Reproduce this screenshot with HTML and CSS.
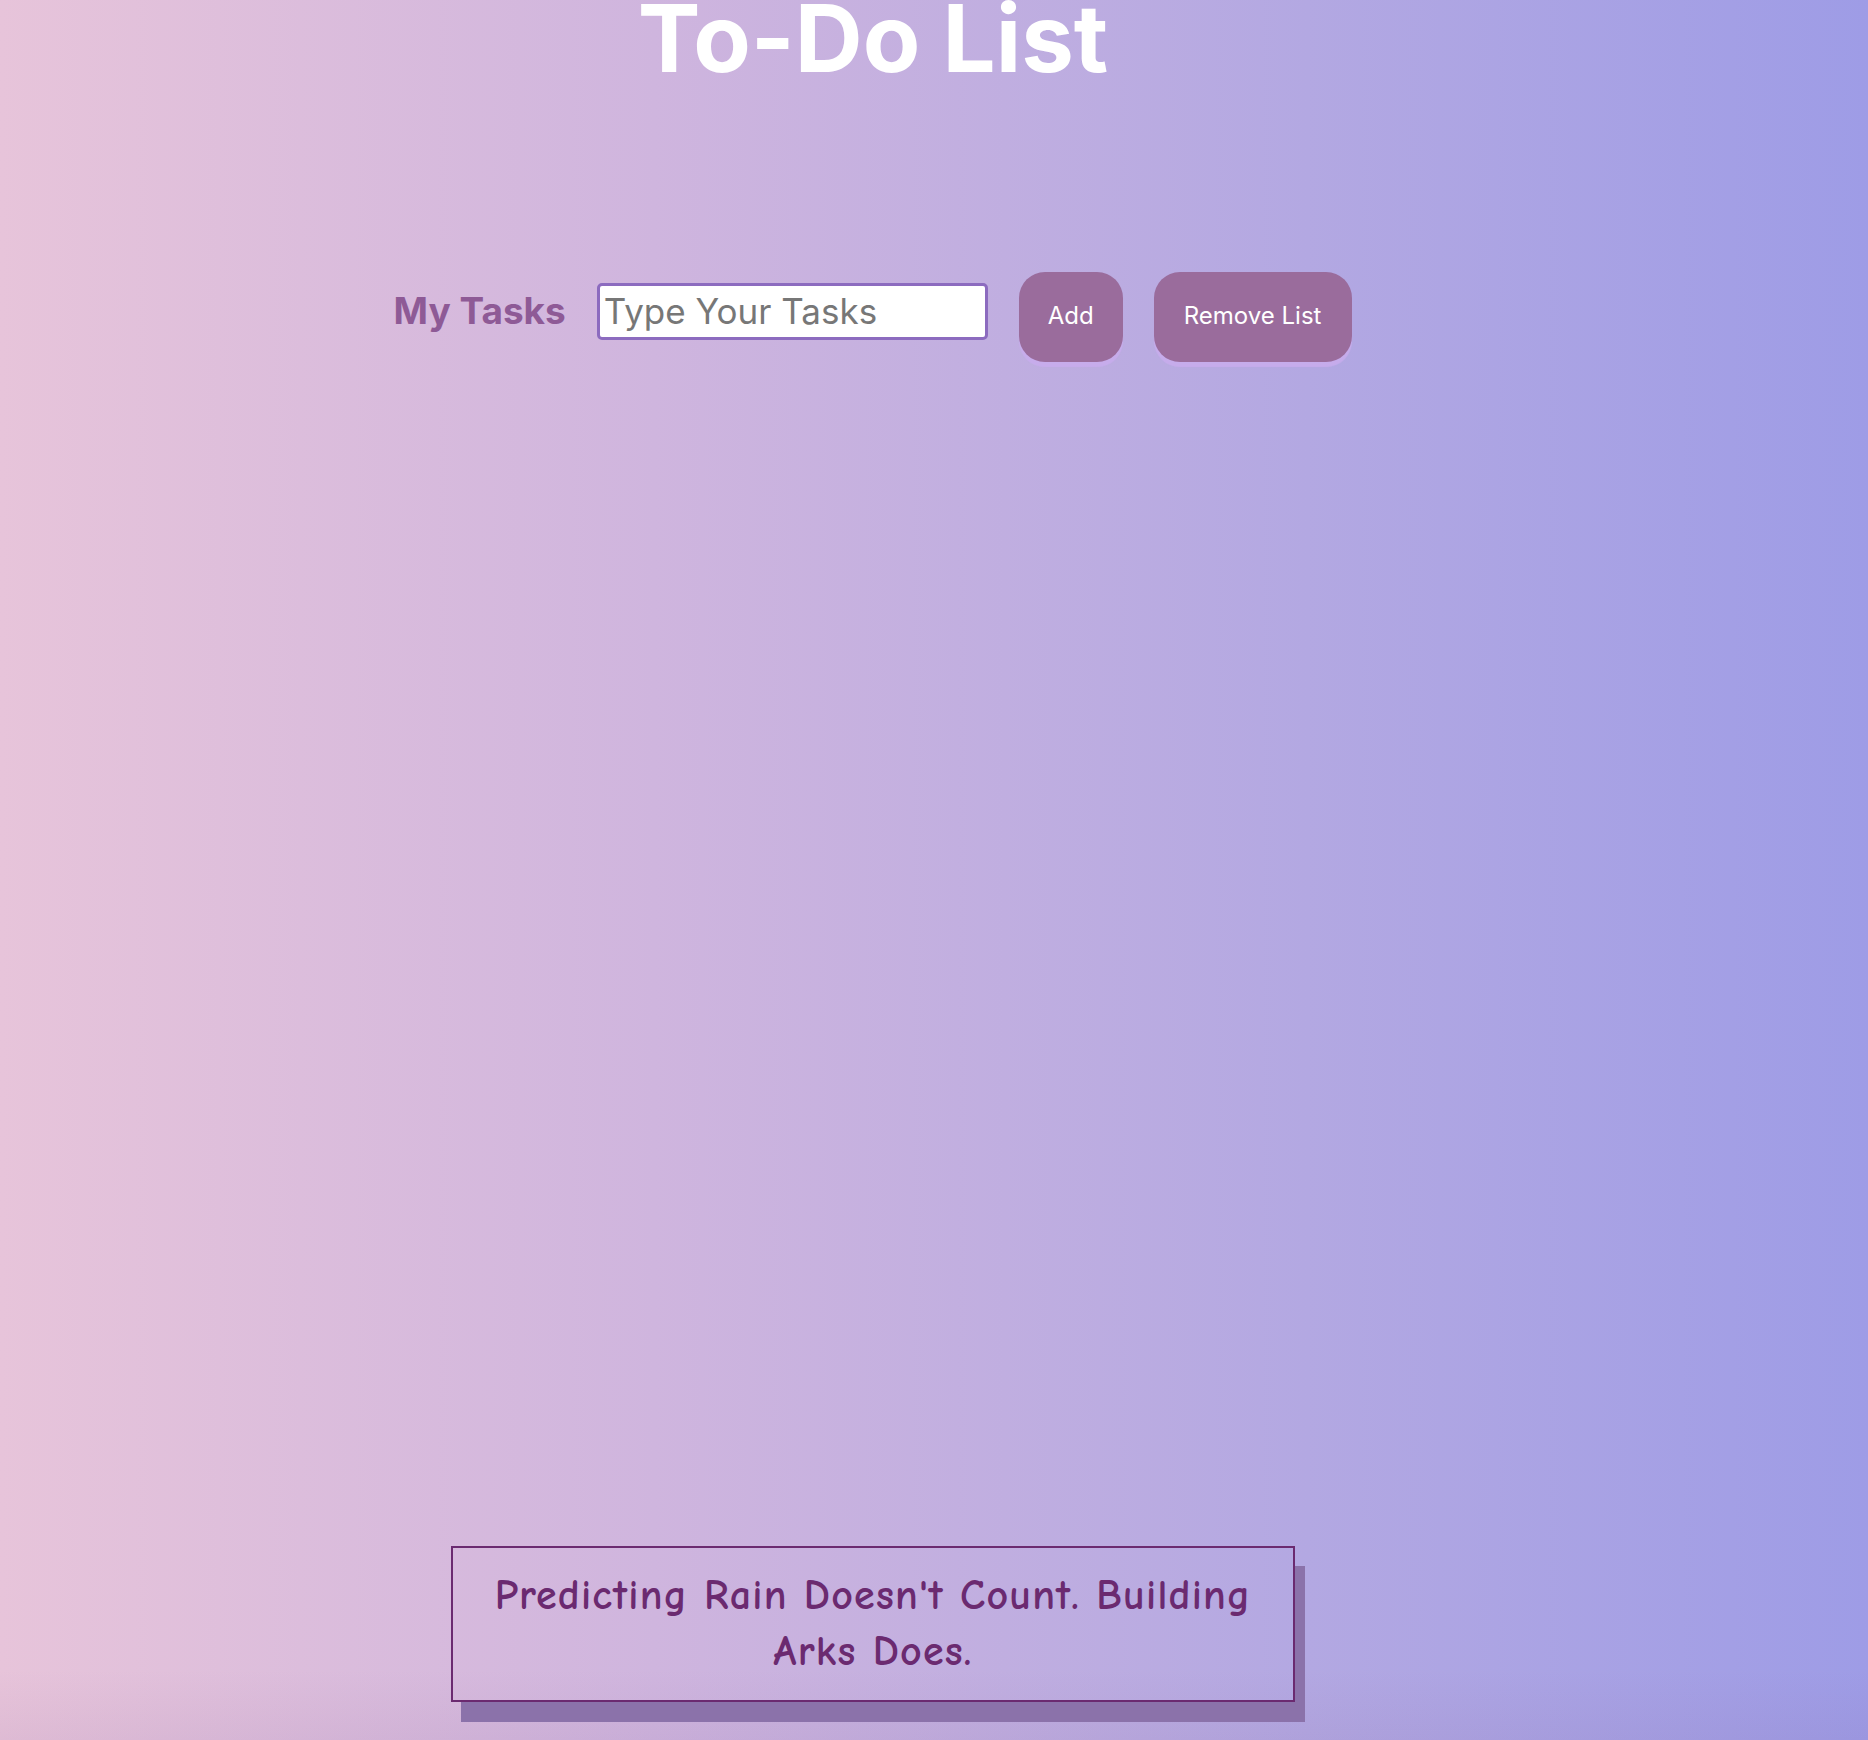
FILE: index.html
```html
<!DOCTYPE html>
<html lang="en">
<head>
<meta charset="utf-8">
<title>To-Do List</title>
<link rel="stylesheet" href="styles.css">
</head>
<body>
<main class="page">
  <h1 class="title">To-Do List</h1>
  <section class="task-bar">
    <label class="task-label" for="task">My Tasks</label>
    <input class="task-input" id="task" type="text" placeholder="Type Your Tasks">
    <button class="btn" type="button">Add</button>
    <button class="btn" type="button">Remove List</button>
  </section>
  <ul class="task-list"></ul>
  <footer class="quote-wrap">
    <blockquote class="quote">Predicting Rain Doesn't Count. Building Arks Does.</blockquote>
  </footer>
</main>
</body>
</html>
```

FILE: styles.css
```css
html, body {
  margin: 0;
  padding: 0;
}

body {
  min-height: 1740px;
  background:
    linear-gradient(to bottom, rgba(120, 80, 140, 0) 0, rgba(120, 80, 140, 0) calc(100% - 70px), rgba(120, 80, 140, 0.08) 100%),
    linear-gradient(to right, #e7c4da 0%, #cfb5de 35%, #b3a8e2 70%, #9e9ce6 100%);
  font-family: Inter, "Liberation Sans", sans-serif;
}

.page {
  box-sizing: border-box;
  min-height: 1740px;
  padding-right: 122px;
  display: flex;
  flex-direction: column;
  align-items: center;
  padding-bottom: 38px;
}

.title {
  margin: -19px 0 0;
  font-size: 94px;
  font-weight: 700;
  color: #ffffff;
  line-height: normal;
}

.task-bar {
  margin-top: 177px;
  display: flex;
  align-items: baseline;
  gap: 31px;
}

.task-label {
  font-size: 37px;
  font-weight: 700;
  color: #8e5a96;
}

.task-input {
  box-sizing: border-box;
  width: 391px;
  height: 57px;
  border: 3px solid #8c6bbf;
  border-radius: 5px;
  padding: 0 4px;
  background: #ffffff;
  font-family: Inter, "Liberation Sans", sans-serif;
  font-size: 35px;
  color: #333;
  outline: none;
}

.task-input::placeholder {
  color: #777777;
}

.btn {
  padding: 29px 29px 32px;
  border: none;
  border-radius: 26px;
  background: #9a6c9c;
  color: #ffffff;
  font-family: Inter, "Liberation Sans", sans-serif;
  font-size: 24px;
  line-height: normal;
  box-shadow: 0 5px 1px rgba(200, 172, 236, 0.9);
  cursor: pointer;
}

.btn + .btn {
  padding-left: 30px;
  padding-right: 31px;
}

.task-list {
  list-style: none;
  margin: 0;
  padding: 0;
}

.quote-wrap {
  margin-top: auto;
}

.quote {
  box-sizing: border-box;
  width: 844px;
  margin: 0;
  padding: 20px 30px;
  border: 2px solid #6b2a70;
  box-shadow: 10px 20px 0 #8b72aa;
  color: #6b2a70;
  font-family: "Comic Sans MS", "Comic Neue", Lato, sans-serif;
  font-weight: 800;
  font-size: 42px;
  letter-spacing: 1.2px;
  line-height: 56px;
  text-align: center;
}
```
